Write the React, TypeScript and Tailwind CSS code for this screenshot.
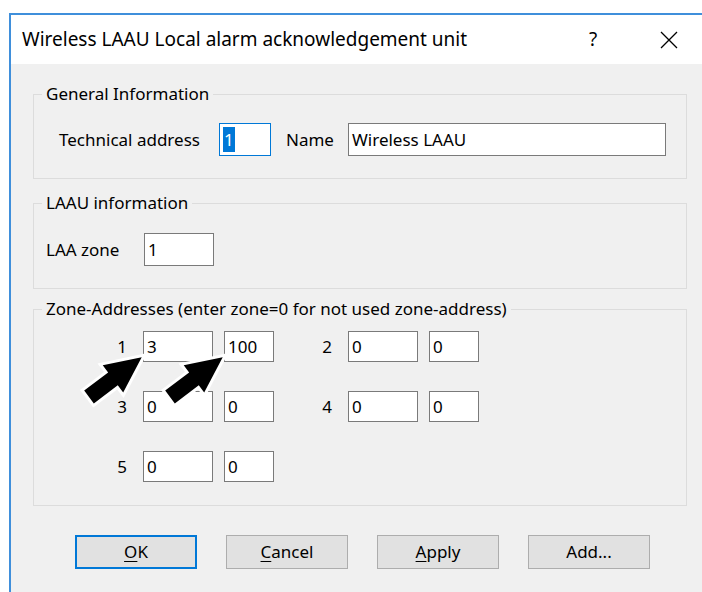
import type { ReactNode } from "react";

const FONT = { fontFamily: '"Noto Sans", "Liberation Sans", sans-serif' };

function TextBox({
  value,
  width,
  height = 31,
  focused = false,
  selected = false,
}: {
  value: string;
  width: number;
  height?: number;
  focused?: boolean;
  selected?: boolean;
}) {
  return (
    <div
      className={
        "flex items-center bg-white pl-[3px] text-[17px] leading-none text-black border " +
        (focused ? "border-[#0078d7]" : "border-[#7a7a7a]")
      }
      style={{ width, height }}
    >
      {selected ? (
        <span className="bg-[#0078d7] text-white px-[1px] py-[4px]">{value}</span>
      ) : (
        <span>{value}</span>
      )}
    </div>
  );
}

function GroupBox({
  title,
  className,
  children,
}: {
  title: string;
  className?: string;
  children: ReactNode;
}) {
  return (
    <fieldset
      className={"ml-[22px] w-[654px] border border-[#dcdcdc] " + (className ?? "")}
    >
      <legend className="ml-[8px] px-[4px] text-[17px] leading-[22px] text-black">
        {title}
      </legend>
      {children}
    </fieldset>
  );
}

function ZonePair({ n, zone, addr }: { n: number; zone: string; addr: string }) {
  return (
    <div className="flex items-center">
      <span className="w-[20px] text-right text-[17px] mr-[16px]">{n}</span>
      <TextBox value={zone} width={70} />
      <div className="ml-[11px]">
        <TextBox value={addr} width={50} />
      </div>
    </div>
  );
}

function DialogButton({
  mnemonic,
  rest,
  primary = false,
}: {
  mnemonic?: string;
  rest: string;
  primary?: boolean;
}) {
  return (
    <button
      className={
        "w-[122px] h-[34px] bg-[#e1e1e1] text-[17px] text-black " +
        (primary ? "border-2 border-[#0078d7]" : "border border-[#adadad]")
      }
    >
      {mnemonic && <span className="underline underline-offset-[3px]">{mnemonic}</span>}
      {rest}
    </button>
  );
}

// thick block arrow, tail at origin pointing along +x
const ARROW = "0,-8 30,-8 30,-17 66,0 30,17 30,8 0,8";

export default function App() {
  return (
    <div
      className="relative w-[702px] h-[592px] overflow-hidden bg-white pt-[13px] pl-[9px]"
      style={FONT}
    >
      <div className="h-[579px] border-t-2 border-l-2 border-[#3f8fdb] bg-[#f0f0f0]">
        {/* caption bar */}
        <div className="flex h-[49px] items-center bg-white pl-[11px] pr-[10px]">
          <span className="text-[19px] text-black whitespace-nowrap">
            Wireless LAAU Local alarm acknowledgement unit
          </span>
          <div className="flex-1" />
          <span className="w-[46px] text-center text-[19px] text-black">?</span>
          <div className="w-[30px]" />
          <div className="flex w-[46px] justify-center">
            <svg width="18" height="18" viewBox="0 0 18 18">
              <path d="M1 1 L17 17 M17 1 L1 17" stroke="#000" strokeWidth="1.3" />
            </svg>
          </div>
        </div>

        <div className="pt-[19px]">
          <GroupBox title="General Information">
            <div className="flex items-center pl-[25px] pt-[18px] pb-[22px] text-[17px]">
              <span className="w-[143px] whitespace-nowrap">Technical address</span>
              <div className="ml-[17px]">
                <TextBox value="1" width={52} height={33} focused selected />
              </div>
              <span className="ml-[15px] w-[44px]">Name</span>
              <div className="ml-[18px]">
                <TextBox value="Wireless LAAU" width={318} height={33} />
              </div>
            </div>
          </GroupBox>

          <GroupBox title="LAAU information" className="mt-[13px]">
            <div className="flex items-center pl-[12px] pt-[19px] pb-[22px] text-[17px]">
              <span className="w-[98px] whitespace-nowrap">LAA zone</span>
              <TextBox value="1" width={70} height={33} />
            </div>
          </GroupBox>

          <GroupBox
            title="Zone-Addresses (enter zone=0 for not used zone-address)"
            className="mt-[9px]"
          >
            <div className="grid grid-cols-[167px_167px] gap-x-[38px] gap-y-[29px] pl-[73px] pt-[11px] pb-[23px]">
              <ZonePair n={1} zone="3" addr="100" />
              <ZonePair n={2} zone="0" addr="0" />
              <ZonePair n={3} zone="0" addr="0" />
              <ZonePair n={4} zone="0" addr="0" />
              <ZonePair n={5} zone="0" addr="0" />
            </div>
          </GroupBox>

          <div className="ml-[64px] mt-[29px] flex gap-[29px]">
            <DialogButton mnemonic="O" rest="K" primary />
            <DialogButton mnemonic="C" rest="ancel" />
            <DialogButton mnemonic="A" rest="pply" />
            <DialogButton rest="Add..." />
          </div>
        </div>
      </div>

      {/* pointer arrows drawn over the zone fields */}
      <svg
        className="pointer-events-none absolute left-0 top-0"
        width="702"
        height="592"
        viewBox="0 0 702 592"
      >
        <polygon
          points={ARROW}
          transform="translate(89 397) rotate(-37)"
          fill="#000"
          stroke="#fff"
          strokeWidth="6"
          strokeLinejoin="miter"
          paintOrder="stroke"
        />
        <polygon
          points={ARROW}
          transform="translate(170 397) rotate(-37)"
          fill="#000"
          stroke="#fff"
          strokeWidth="6"
          strokeLinejoin="miter"
          paintOrder="stroke"
        />
      </svg>
    </div>
  );
}
